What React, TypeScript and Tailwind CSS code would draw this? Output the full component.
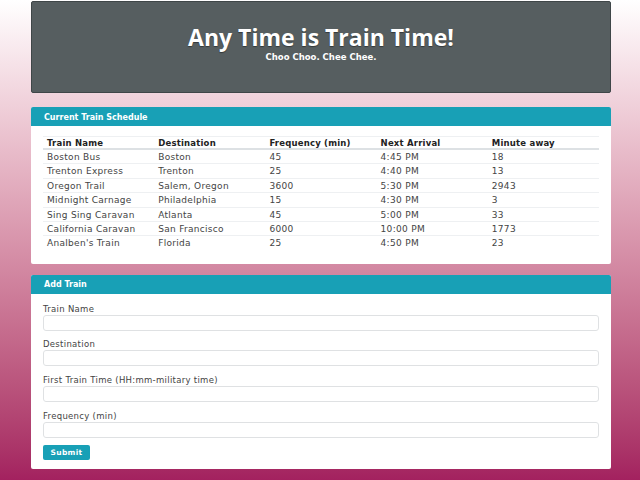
const trains = [
  ["Boston Bus", "Boston", "45", "4:45 PM", "18"],
  ["Trenton Express", "Trenton", "25", "4:40 PM", "13"],
  ["Oregon Trail", "Salem, Oregon", "3600", "5:30 PM", "2943"],
  ["Midnight Carnage", "Philadelphia", "15", "4:30 PM", "3"],
  ["Sing Sing Caravan", "Atlanta", "45", "5:00 PM", "33"],
  ["California Caravan", "San Francisco", "6000", "10:00 PM", "1773"],
  ["Analben's Train", "Florida", "25", "4:50 PM", "23"],
];

const headers = ["Train Name", "Destination", "Frequency (min)", "Next Arrival", "Minute away"];

const fields = ["Train Name", "Destination", "First Train Time (HH:mm-military time)", "Frequency (min)"];

const App = () => {
  return (
    <div className="h-[480px] w-[640px] overflow-hidden bg-gradient-to-b from-white to-[#a3215f] pt-px font-['DejaVu_Sans',sans-serif]">
      <div className="ml-[31px] flex w-[580px] flex-col">
        {/* jumbotron */}
        <div className="flex h-[92px] flex-col items-center justify-center rounded-[2px] border border-[#3f4648] bg-[#565e60] pb-[10px] text-white">
          <h1 className="font-['Open_Sans',sans-serif] text-[23px] font-bold leading-[30px] [text-shadow:0_1px_1px_rgba(0,0,0,0.4)]">Any Time is Train Time!</h1>
          <p className="text-[8.5px] font-bold leading-[10px]">Choo Choo. Chee Chee.</p>
        </div>

        {/* schedule */}
        <div className="mt-[14px] overflow-hidden rounded-[2px] bg-white">
          <div className="flex h-[19px] items-center bg-[#18a0b6] px-[13px] pt-[2px] text-[8px] font-bold text-white">
            Current Train Schedule
          </div>
          <div className="px-[12px] pb-[13px] pt-[10px] text-[9px] tracking-[0.3px] text-[#444]">
            <div className="grid h-[14px] grid-cols-5 items-center border-b-2 border-t border-b-[#dde1e4] border-t-[#eef0f2] text-[8.5px] font-bold tracking-[0.2px] text-[#222]">
              {headers.map((h) => (
                <div key={h} className="pl-[4px]">{h}</div>
              ))}
            </div>
            {trains.map((row) => (
              <div key={row[0]} className="grid h-[14.4px] grid-cols-5 items-center border-b border-[#eef0f2] pt-px last:border-b-0">
                {row.map((c, i) => (
                  <div key={i} className="pl-[4px]">{c}</div>
                ))}
              </div>
            ))}
          </div>
        </div>

        {/* add train form */}
        <div className="mt-[11px] overflow-hidden rounded-[2px] bg-white">
          <div className="flex h-[19px] items-center bg-[#18a0b6] px-[13px] pt-[2px] text-[8px] font-bold text-white">
            Add Train
          </div>
          <div className="px-[12px] pb-[9px] pt-[9px] text-[8.5px] tracking-[0.3px] text-[#444]">
            {fields.map((f) => (
              <div key={f} className="mb-[7.7px]">
                <div className="h-[12px] leading-[12px]">{f}</div>
                <div className="h-[16px] rounded-[3px] border border-[#dfe1e3]" />
              </div>
            ))}
            <div className="flex h-[15px] w-[47px] items-center justify-center rounded-[2px] bg-[#18a0b6] text-[7.5px] font-bold text-white">
              Submit
            </div>
          </div>
        </div>
      </div>
    </div>
  );
};

export default App;
